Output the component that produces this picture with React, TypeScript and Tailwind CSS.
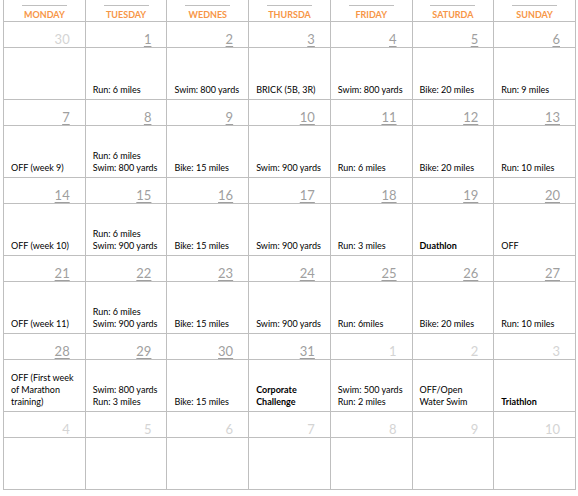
type Day = {
  n: number;
  dim?: boolean;
  lines?: string[];
  bold?: boolean;
};

const headers = ["MONDAY", "TUESDAY", "WEDNES", "THURSDA", "FRIDAY", "SATURDA", "SUNDAY"];

const weeks: Day[][] = [
  [
    { n: 30, dim: true },
    { n: 1, lines: ["Run: 6 miles"] },
    { n: 2, lines: ["Swim: 800 yards"] },
    { n: 3, lines: ["BRICK (5B, 3R)"] },
    { n: 4, lines: ["Swim: 800 yards"] },
    { n: 5, lines: ["Bike: 20 miles"] },
    { n: 6, lines: ["Run: 9 miles"] },
  ],
  [
    { n: 7, lines: ["OFF (week 9)"] },
    { n: 8, lines: ["Run: 6 miles", "Swim: 800 yards"] },
    { n: 9, lines: ["Bike: 15 miles"] },
    { n: 10, lines: ["Swim: 900 yards"] },
    { n: 11, lines: ["Run: 6 miles"] },
    { n: 12, lines: ["Bike: 20 miles"] },
    { n: 13, lines: ["Run: 10 miles"] },
  ],
  [
    { n: 14, lines: ["OFF (week 10)"] },
    { n: 15, lines: ["Run: 6 miles", "Swim: 900 yards"] },
    { n: 16, lines: ["Bike: 15 miles"] },
    { n: 17, lines: ["Swim: 900 yards"] },
    { n: 18, lines: ["Run: 3 miles"] },
    { n: 19, lines: ["Duathlon"], bold: true },
    { n: 20, lines: ["OFF"] },
  ],
  [
    { n: 21, lines: ["OFF (week 11)"] },
    { n: 22, lines: ["Run: 6 miles", "Swim: 900 yards"] },
    { n: 23, lines: ["Bike: 15 miles"] },
    { n: 24, lines: ["Swim: 900 yards"] },
    { n: 25, lines: ["Run: 6miles"] },
    { n: 26, lines: ["Bike: 20 miles"] },
    { n: 27, lines: ["Run: 10 miles"] },
  ],
  [
    { n: 28, lines: ["OFF (First week", "of Marathon", "training)"] },
    { n: 29, lines: ["Swim: 800 yards", "Run: 3 miles"] },
    { n: 30, lines: ["Bike: 15 miles"] },
    { n: 31, lines: ["Corporate", "Challenge"], bold: true },
    { n: 1, dim: true, lines: ["Swim: 500 yards", "Run: 2 miles"] },
    { n: 2, dim: true, lines: ["OFF/Open", "Water Swim"] },
    { n: 3, dim: true, lines: ["Triathlon"], bold: true },
  ],
  [
    { n: 4, dim: true },
    { n: 5, dim: true },
    { n: 6, dim: true },
    { n: 7, dim: true },
    { n: 8, dim: true },
    { n: 9, dim: true },
    { n: 10, dim: true },
  ],
];

function DateCell({ day }: { day: Day }) {
  return (
    <div className="h-[26px] border-r border-b border-[#bfbfbf] flex items-end justify-end pr-[15px]">
      {day.dim ? (
        <span className="text-[13px] leading-[16px] text-[#d4d4d4]">{day.n}</span>
      ) : (
        <span className="text-[13px] leading-[16px] text-[#9f9f9f] underline decoration-[#9f9f9f] underline-offset-2">
          {day.n}
        </span>
      )}
    </div>
  );
}

function NoteCell({ day }: { day: Day }) {
  return (
    <div
      className={
        "h-[52px] border-r border-b border-[#bfbfbf] flex flex-col justify-end pl-[7px] pb-[3px] text-[9px] leading-[12px] text-black " +
        (day.bold ? "font-bold" : "")
      }
    >
      {(day.lines ?? []).map((l, i) => (
        <div key={i} className="whitespace-nowrap">
          {l}
        </div>
      ))}
    </div>
  );
}

export default function App() {
  return (
    <div
      className="w-[578px] h-[496px] bg-white"
      style={{ fontFamily: "Lato, 'Open Sans', sans-serif" }}
    >
      <div className="ml-[3px] w-[573px] border-l border-[#bfbfbf] grid grid-cols-7">
        {headers.map((h) => (
          <div key={h} className="h-[22px] border-r border-b border-[#bfbfbf] flex flex-col items-center pt-[5px]">
            <div className="w-[45px] h-px bg-[#bfbfbf]" />
            <div className="mt-[3px] text-[9px] leading-[11px] font-bold text-[#f79646] whitespace-nowrap">
              {h}
            </div>
          </div>
        ))}
        {weeks.map((week, wi) => (
          <div key={wi} className="contents">
            {week.map((d, di) => (
              <DateCell key={"d" + di} day={d} />
            ))}
            {week.map((d, di) => (
              <NoteCell key={"n" + di} day={d} />
            ))}
          </div>
        ))}
      </div>
    </div>
  );
}
